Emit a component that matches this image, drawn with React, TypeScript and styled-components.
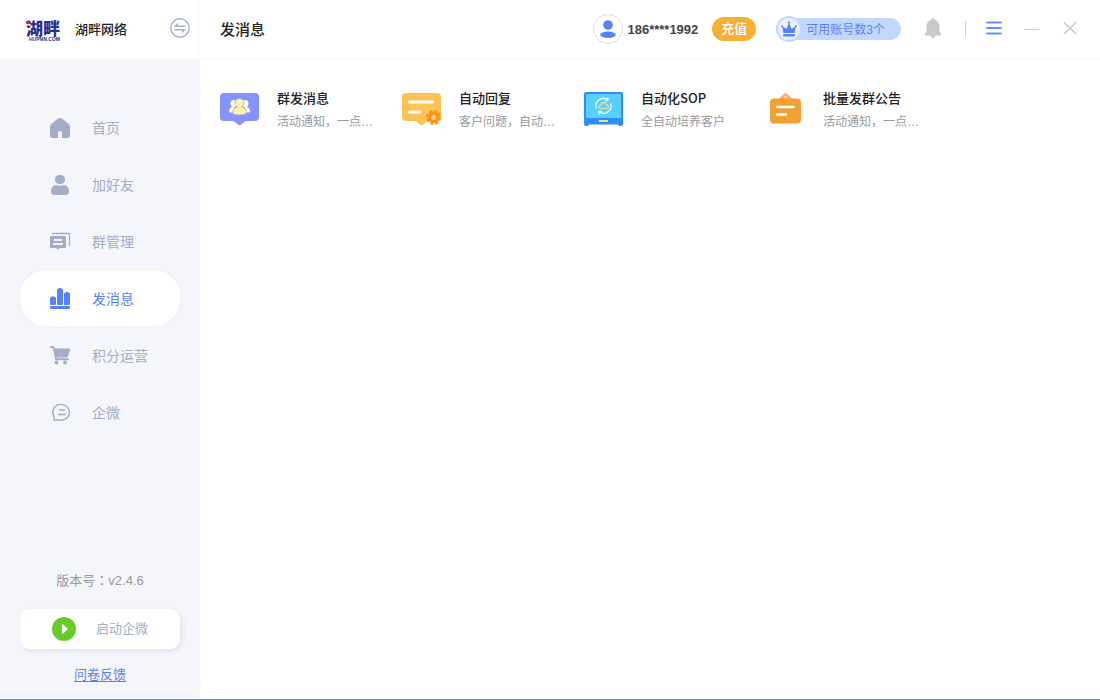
import React from "react";
import styled, { createGlobalStyle } from "styled-components";

const GlobalStyle = createGlobalStyle`
  * { box-sizing: border-box; }
  html, body, #root { height: 100%; }
  body {
    margin: 0;
    background: #fff;
    color: #333;
    font-family: "Liberation Sans", "Noto Sans CJK SC", sans-serif;
    font-size: 13px;
  }
  button { font-family: inherit; border: 0; padding: 0; background: none; cursor: pointer; }
  h1, h2, p, ul { margin: 0; padding: 0; }
  svg { display: block; flex: none; }
`;

const Shell = styled.div`
  display: grid;
  grid-template-columns: 200px 1fr;
  min-height: 100%;
  border-bottom: 1px solid #4f8fc4;
`;

const Sidebar = styled.aside`
  display: flex;
  flex-direction: column;
  background: #f4f6fb;
`;

const Brand = styled.div`
  display: flex;
  align-items: center;
  height: 59px;
  padding: 0 10px 0 25px;
  background: #fff;
  border-right: 2px solid #fcfcfc;
`;

const BrandName = styled.span`
  flex: 1;
  margin-left: 12px;
  padding-top: 1px;
  font-size: 13px;
  line-height: 20px;
  font-weight: 500;
  color: #222;
`;

const SwitchButton = styled.button`
  margin-right: -2px;
  padding-bottom: 3px;
`;

const Nav = styled.nav`
  display: flex;
  flex-direction: column;
  gap: 1px;
  padding: 40px 20px 0;
`;

const NavItem = styled.a<{ $active?: boolean }>`
  display: flex;
  align-items: center;
  gap: 20px;
  height: 56px;
  padding: 2px 28px 0;
  border-radius: 26px;
  font-size: 14px;
  line-height: 20px;
  text-decoration: none;
  white-space: nowrap;
  color: ${(p) => (p.$active ? "#5781f9" : "#a4acc8")};
  background: ${(p) => (p.$active ? "#fff" : "transparent")};
  box-shadow: ${(p) => (p.$active ? "0 0 4px rgba(120, 130, 170, 0.06)" : "none")};
`;

const SideFooter = styled.div`
  display: flex;
  flex-direction: column;
  align-items: center;
  margin-top: auto;
  padding: 0 20px 14px;
`;

const Version = styled.p`
  line-height: 20px;
  color: #999;
`;

const Colon = styled.span`
  font-family: "Noto Sans CJK TC", sans-serif;
`;

const LaunchButton = styled.button`
  display: flex;
  align-items: center;
  gap: 20px;
  width: 100%;
  height: 40px;
  margin: 18px 0 16px;
  padding: 0 32px;
  border-radius: 10px;
  background: #fff;
  box-shadow: 2px 2px 6px rgba(0, 0, 0, 0.08);
  color: #a4acc8;
  font-size: 13px;
  line-height: 20px;
`;

const FeedbackLink = styled.a`
  line-height: 20px;
  color: #5781f9;
  text-underline-offset: 2px;
`;

const Main = styled.main`
  display: flex;
  flex-direction: column;
  min-width: 0;
`;

const TopBar = styled.header`
  display: flex;
  align-items: center;
  height: 60px;
  padding: 0 22px 0 20px;
  border-bottom: 2px solid #f9f9f9;
`;

const PageTitle = styled.h1`
  flex: 1;
  padding-top: 1px;
  font-size: 15px;
  line-height: 22px;
  font-weight: 500;
  color: #222;
`;

const Avatar = styled.span`
  display: flex;
  align-items: center;
  justify-content: center;
  width: 30px;
  height: 30px;
  border: 1px solid #ddd;
  border-radius: 50%;
`;

const Phone = styled.span`
  margin: 0 14px 0 4px;
  padding-top: 1px;
  font-weight: 700;
  line-height: 20px;
  color: #444;
`;

const RechargeButton = styled.button`
  width: 44px;
  height: 24px;
  border-radius: 12px;
  background: #f9ae35;
  color: #fff;
  font-size: 13px;
  line-height: 24px;
  font-weight: 500;
`;

const Quota = styled.span`
  display: flex;
  align-items: center;
  height: 22px;
  margin: 0 24px 0 20px;
  padding-right: 16px;
  border-radius: 11px;
  background: #c2d7ff;
  color: #5781f9;
  font-size: 12px;
  line-height: 22px;
`;

const QuotaLabel = styled.span`
  padding-top: 2px;
`;

const Crown = styled.span`
  display: flex;
  align-items: center;
  justify-content: center;
  width: 26px;
  height: 26px;
  margin-right: 4px;
  border: 2px solid #c2d7ff;
  border-radius: 50%;
  background: #e8f0ff;
`;

const Divider = styled.span`
  width: 1px;
  height: 16px;
  margin: 0 20px 0 24px;
  background: #ccc;
`;

const WindowButton = styled.button`
  padding-bottom: 2px;
  & + & { margin-left: 22px; }
`;

const Features = styled.ul`
  display: grid;
  grid-template-columns: repeat(auto-fill, 162px);
  gap: 20px;
  padding: 28px 20px;
  list-style: none;
`;

const Feature = styled.li`
  display: flex;
  gap: 17px;
`;

const FeatureIcon = styled.span`
  flex: none;
  width: 40px;
  padding-top: 4px;
`;

const FeatureText = styled.div`
  min-width: 0;
`;

const FeatureTitle = styled.h2`
  font-size: 13px;
  line-height: 20px;
  font-weight: 500;
  color: #222;
  white-space: nowrap;
  font-family: "Noto Sans CJK SC", sans-serif;
`;

const FeatureNote = styled.p`
  margin-top: 5px;
  white-space: nowrap;
  font-size: 12px;
  line-height: 18px;
  color: #999;
`;

const Logo = () => (
  <svg width="38" height="34" viewBox="0 0 38 34" role="img" aria-label="湖畔">
    <text x="1" y="22" fontFamily="Noto Sans CJK SC, sans-serif" fontSize="17" fontWeight="900" fill="#2a2f92">湖畔</text>
    <circle cx="2.600" cy="9.500" r="1.800" fill="#f01c24" />
    <text x="4" y="28" fontFamily="Liberation Sans, sans-serif" fontSize="5" fontWeight="700" fill="#2a2f92">HUPNN.COM</text>
  </svg>
);

const SwitchIcon = () => (
  <svg width="20" height="20" viewBox="0 0 20 20" fill="none" stroke="#a4b0d4">
    <circle cx="10" cy="10" r="9.200" strokeWidth="1.400" />
    <path d="M8 5.500 5.500 8.300H15.500M4.500 11.700H14.500L12 14.500" strokeWidth="1.600" />
  </svg>
);

const HomeIcon = () => (
  <svg width="24" height="24" viewBox="0 0 24 24" fill="currentColor">
    <path d="M10.2 2.600q1.800-1.200 3.600 0l6.400 5Q22 9 22 11.200V19q0 3-3 3h-5v-5.200q0-1.800-2-1.800t-2 1.800V22H5q-3 0-3-3v-7.800Q2 9 3.800 7.600Z" />
  </svg>
);

const FriendIcon = () => (
  <svg width="24" height="24" viewBox="0 0 24 24" fill="currentColor">
    <rect x="7" y="2" width="10" height="9" rx="4.300" />
    <path d="M8 12q4 1.400 8 0 5 1.200 5 6.500Q21 22 17 22H7q-4 0-4-3.500Q3 13.200 8 12Z" />
  </svg>
);

const GroupIcon = () => (
  <svg width="24" height="24" viewBox="0 0 24 24" fill="currentColor">
    <path fillRule="evenodd" d="M3 6H17Q18 6 18 7V17Q18 18 17 18H12l-2 1.500L8 18H3Q2 18 2 17V7Q2 6 3 6ZM6 9v2h8V9ZM5 13v2h10V13Z" />
    <path d="M4 3.500H21.500V16" fill="none" stroke="currentColor" strokeWidth="1.300" />
  </svg>
);

const ChartIcon = () => (
  <svg width="24" height="24" viewBox="0 0 24 24" fill="currentColor">
    <path d="M2 17v-5.500Q2 10 3.500 9.800 5 8.500 6.500 9.800 8 10 8 11.500V17q0 1-1 1H3q-1 0-1-1Z" />
    <path d="M9 17V3q0-1.300 1.500-1.500 1.500-1.300 3 0Q15 1.700 15 3v14q0 1-1 1h-4q-1 0-1-1Z" />
    <path d="M16 17V7q0-1.300 1.500-1.500 1.500-1.300 3 0Q22 5.700 22 7v10q0 1-1 1h-4q-1 0-1-1Z" />
    <rect x="2" y="19" width="20" height="3" rx="1" />
  </svg>
);

const CartIcon = () => (
  <svg width="24" height="24" viewBox="0 0 24 24" fill="currentColor">
    <path d="M3 3h2.200l1.200 3 1.600 9.200H20" fill="none" stroke="currentColor" strokeWidth="2" strokeLinecap="round" strokeLinejoin="round" />
    <path d="M5.500 4.500H21.200q1 .2.800 1.300l-2 6.700q-.4 1-1.400 1H7.500Z" />
    <circle cx="8.500" cy="18.500" r="1.900" /><circle cx="17" cy="18.500" r="1.900" />
  </svg>
);

const ChatIcon = () => (
  <svg width="24" height="24" viewBox="0 0 24 24" fill="none" stroke="currentColor" strokeWidth="1.400">
    <path d="M6 19.300V15.500A8.300 7.900 0 1 1 10.500 18.800Z" strokeLinejoin="round" />
    <path d="M11 9h6M10 13.500h8" />
  </svg>
);

const PlayIcon = () => (
  <svg width="24" height="24" viewBox="0 0 24 24">
    <circle cx="12" cy="12" r="12" fill="#66cc27" />
    <path d="M10.500 7.500 15.500 12l-5 4.500Z" fill="#fff" stroke="#fff" strokeLinejoin="round" />
  </svg>
);

const UserIcon = () => (
  <svg width="18" height="20" viewBox="0 0 18 20" fill="#5781f9">
    <circle cx="9" cy="6" r="4.800" /><ellipse cx="9" cy="15.800" rx="7.800" ry="3.200" />
  </svg>
);

const CrownIcon = () => (
  <svg width="18" height="18" viewBox="0 0 18 18" fill="#5781f9">
    <path d="M2 6 6.500 9 9 2.500 11.500 9 16 6 14.500 13h-11Z" />
    <circle cx="2" cy="6" r=".9" /><circle cx="9" cy="2.500" r="1.100" /><circle cx="16" cy="6" r=".9" />
    <rect x="3" y="14" width="12" height="2.500" rx="1" />
  </svg>
);

const BellIcon = () => (
  <svg width="16" height="20" viewBox="0 0 16 20" fill="#c9c9c9">
    <path d="M6.500 1.500a1.500 1.500 0 0 1 3 0Q14.500 3 14.500 8.500V14q1.700.8 1.500 3.500H0q-.2-2.700 1.500-3.500V8.500Q1.500 3 6.500 1.500ZM5.500 17.500h5Q10 20 8 20t-2.500-2.500Z" />
  </svg>
);

const MenuIcon = () => (
  <svg width="16" height="16" viewBox="0 0 16 16" stroke="#6a8ffa" strokeWidth="1.800" strokeLinecap="round">
    <path d="M1 2.500h14M1 8h14M1 13.500h14" />
  </svg>
);

const MinimizeIcon = () => (
  <svg width="16" height="16" viewBox="0 0 16 16" stroke="#ccc"><path d="M0 9.500h15" /></svg>
);

const CloseIcon = () => (
  <svg width="16" height="16" viewBox="0 0 16 16" stroke="#c4c4c4" strokeWidth="1.200"><path d="M2 2.500 14 14M14 2.500 2 14" /></svg>
);

const BroadcastIcon = () => (
  <svg width="40" height="36" viewBox="0 0 40 36">
    <path d="M4 1H35q4 0 4 4V25q0 4-4 4H25.500l-4.500 3.500q-1.500 1-3 0L13.500 29H4q-4 0-4-4V5Q0 1 4 1Z" fill="#8693ff" />
    <g fill="#fff">
      <circle cx="14" cy="11.500" r="3.500" /><path d="M9 19.500q0-4.500 5-5.500v6.500h-3.500q-1.500 0-1.500-1Z" />
      <circle cx="25" cy="11.500" r="3.500" /><path d="M30 19.500q0-4.500-5-5.500v6.500h3.500q1.500 0 1.500-1Z" />
    </g>
    <path d="M12.500 20.500q0-4 4.700-5.700Q14.500 12.500 15 10q.8-3.500 4.500-3.500T24 10q.5 2.500-2.200 4.800 4.700 1.700 4.700 5.700 0 2.500-7 2.500t-7-2.500Z" fill="#fff3a1" stroke="#8693ff" strokeWidth=".6" />
  </svg>
);

const ReplyIcon = () => (
  <svg width="40" height="36" viewBox="0 0 40 36">
    <path d="M4 1H35q4 0 4 4V25q0 4-4 4H25.500l-4.500 3.500q-1.500 1-3 0L13.500 29H4q-4 0-4-4V5Q0 1 4 1Z" fill="#ffc255" />
    <path d="M7.500 10h23M7.500 20h10" stroke="#fff" strokeWidth="3" strokeLinecap="round" />
    <g transform="translate(31.500 25.500)">
      <circle r="5.800" fill="#ff9413" />
      <circle r="6.200" fill="none" stroke="#ff9413" strokeWidth="2.500" strokeDasharray="2.900 1.970" />
      <circle r="2.500" fill="#ffd48c" />
    </g>
  </svg>
);

const SopIcon = () => (
  <svg width="40" height="36" viewBox="0 0 40 36">
    <path d="M2 0H37q2 0 2 2V32q0 2-2 2h-2l-1-1.500H5L4 34H2q-2 0-2-2V2Q0 0 2 0Z" fill="#2e8dfd" />
    <rect x="2" y="2" width="35" height="24" rx="1" fill="#57cfff" />
    <rect x="15" y="28" width="9" height="2" fill="#ebe06f" />
    <g fill="none" stroke="#e4f8ff" strokeWidth="1.400">
      <path d="M12.500 16.500a7.300 7.300 0 0 1 11-8.700M15.500 20a7.300 7.300 0 0 0 11-8.500M23.800 5.500v3h-3M15 22.500v-3h3" />
    </g>
    <path d="M17 16.500q-2-.2-2-1.800t2-1.700q.5-2.500 2.800-2.500T22.500 13q2 .2 2 1.800T22.500 16.500Z" fill="none" stroke="#dde28b" strokeWidth="1.400" />
  </svg>
);

const NoticeIcon = () => (
  <svg width="40" height="36" viewBox="0 0 40 36">
    <path d="M12 7.500 18 1.700q1.500-1.200 3 0L27 7.500Z" fill="#ffab78" />
    <circle cx="19.500" cy="5" r="1" fill="#ffe3d0" />
    <rect x="4" y="6.500" width="31" height="25" rx="4" fill="#f2a030" />
    <path d="M11 15h16.500M11 22.500h9" stroke="#fff" strokeWidth="2.600" strokeLinecap="round" />
  </svg>
);

const navItems = [
  { label: "首页", Icon: HomeIcon },
  { label: "加好友", Icon: FriendIcon },
  { label: "群管理", Icon: GroupIcon },
  { label: "发消息", Icon: ChartIcon, active: true },
  { label: "积分运营", Icon: CartIcon },
  { label: "企微", Icon: ChatIcon },
];

const features = [
  { title: "群发消息", note: "活动通知，一点…", Icon: BroadcastIcon },
  { title: "自动回复", note: "客户问题，自动…", Icon: ReplyIcon },
  { title: "自动化SOP", note: "全自动培养客户", Icon: SopIcon },
  { title: "批量发群公告", note: "活动通知，一点…", Icon: NoticeIcon },
];

export default function App() {
  return (
    <>
      <GlobalStyle />
      <Shell>
        <Sidebar>
          <Brand>
            <Logo />
            <BrandName>湖畔网络</BrandName>
            <SwitchButton aria-label="切换"><SwitchIcon /></SwitchButton>
          </Brand>
          <Nav>
            {navItems.map(({ label, Icon, active }) => (
              <NavItem key={label} href="#" $active={active} aria-current={active ? "page" : undefined}>
                <Icon />
                {label}
              </NavItem>
            ))}
          </Nav>
          <SideFooter>
            <Version>版本号<Colon>：</Colon>v2.4.6</Version>
            <LaunchButton><PlayIcon />启动企微</LaunchButton>
            <FeedbackLink href="#">问卷反馈</FeedbackLink>
          </SideFooter>
        </Sidebar>
        <Main>
          <TopBar>
            <PageTitle>发消息</PageTitle>
            <Avatar><UserIcon /></Avatar>
            <Phone>186****1992</Phone>
            <RechargeButton>充值</RechargeButton>
            <Quota><Crown><CrownIcon /></Crown><QuotaLabel>可用账号数3个</QuotaLabel></Quota>
            <WindowButton aria-label="通知"><BellIcon /></WindowButton>
            <Divider />
            <WindowButton aria-label="菜单"><MenuIcon /></WindowButton>
            <WindowButton aria-label="最小化"><MinimizeIcon /></WindowButton>
            <WindowButton aria-label="关闭"><CloseIcon /></WindowButton>
          </TopBar>
          <Features>
            {features.map(({ title, note, Icon }) => (
              <Feature key={title}>
                <FeatureIcon><Icon /></FeatureIcon>
                <FeatureText>
                  <FeatureTitle>{title}</FeatureTitle>
                  <FeatureNote>{note}</FeatureNote>
                </FeatureText>
              </Feature>
            ))}
          </Features>
        </Main>
      </Shell>
    </>
  );
}
